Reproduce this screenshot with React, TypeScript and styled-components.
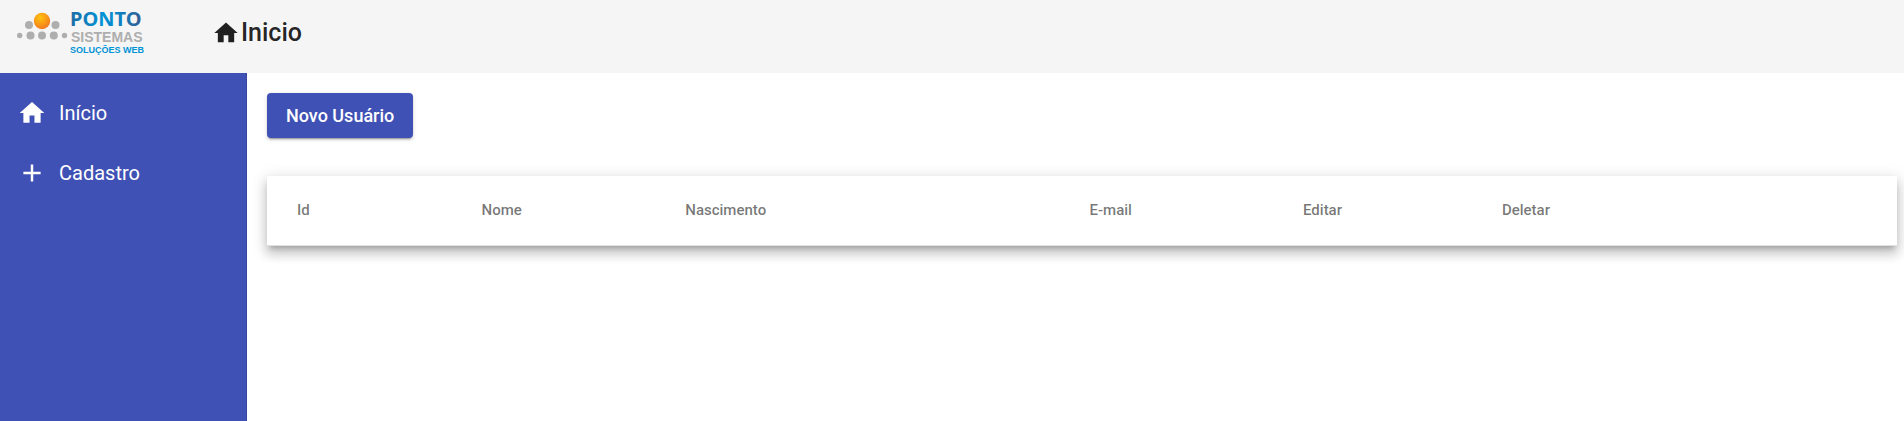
import React from "react";
import styled, { createGlobalStyle } from "styled-components";

const GlobalStyle = createGlobalStyle`
  *, *::before, *::after { box-sizing: border-box; }
  html, body, #root { height: 100%; }
  body { margin: 0; background: #fff; font-family: Roboto, "Liberation Sans", sans-serif; }
`;

const Page = styled.div`
  display: flex;
  flex-direction: column;
  min-height: 100%;
`;

const Header = styled.header`
  display: flex;
  align-items: flex-start;
  height: 73px;
  padding: 0 16px;
  background: #f5f5f5;
  color: rgba(0, 0, 0, 0.87);
`;

const LogoLink = styled.a`
  display: block;
  width: 196px;
`;

const Title = styled.h1`
  display: flex;
  align-items: center;
  gap: 1px;
  margin: 0;
  padding-top: 17px;
  font-size: 25px;
  font-weight: 500;
  line-height: 32px;
`;

const Body = styled.div`
  display: flex;
  flex: 1;
`;

const Sidebar = styled.nav`
  flex: 0 0 247px;
  padding-top: 8px;
  background: #3f51b5;
  border-right: 1px solid #37479f;
`;

const MenuItem = styled.a`
  display: flex;
  align-items: center;
  gap: 11px;
  height: 60px;
  padding: 4px 16px 0;
  color: #fff;
  font-size: 20px;
  line-height: 24px;
  text-decoration: none;
`;

const Icon = styled.svg<{ $size: number }>`
  flex: none;
  width: ${(p) => p.$size}px;
  height: ${(p) => p.$size}px;
  fill: currentColor;
`;

const Content = styled.main`
  flex: 1;
  min-width: 0;
  padding: 20px 7px 20px 20px;
`;

const PrimaryButton = styled.button`
  display: block;
  height: 45px;
  padding: 0 19px;
  border: 0;
  border-radius: 4px;
  background: #3f51b5;
  color: #fff;
  font-family: inherit;
  font-size: 18px;
  font-weight: 500;
  cursor: pointer;
  box-shadow: 0 3px 1px -2px rgba(0, 0, 0, 0.2), 0 2px 2px 0 rgba(0, 0, 0, 0.14),
    0 1px 5px 0 rgba(0, 0, 0, 0.12);
`;

const Table = styled.table`
  width: 100%;
  margin-top: 38px;
  border-collapse: separate;
  border-spacing: 0;
  table-layout: fixed;
  background: #fff;
  box-shadow: 0 5px 5px -3px rgba(0, 0, 0, 0.2), 0 8px 10px 1px rgba(0, 0, 0, 0.14),
    0 3px 14px 2px rgba(0, 0, 0, 0.12);
`;

const HeadCell = styled.th<{ $width?: string }>`
  width: ${(p) => p.$width ?? "auto"};
  height: 70px;
  padding: 0 0 2px 1px;
  border-bottom: 1px solid rgba(0, 0, 0, 0.12);
  color: rgba(0, 0, 0, 0.54);
  font-size: 15px;
  font-weight: 500;
  line-height: 20px;
  text-align: left;

  &:first-child {
    padding-left: 30px;
  }
`;

const columns = [
  { label: "Id", width: "13.1%" },
  { label: "Nome", width: "12.5%" },
  { label: "Nascimento", width: "24.8%" },
  { label: "E-mail", width: "13.1%" },
  { label: "Editar", width: "12.2%" },
  { label: "Deletar" },
];

const HOME = "M10 20v-6h4v6h5v-8h3L12 3 2 12h3v8z";
const ADD = "M19 13h-6v6h-2v-6H5v-2h6V5h2v6h6v2z";

function Logo() {
  return (
    <svg width="136" height="60" viewBox="16 0 136 60" role="img" aria-label="Ponto Sistemas Soluções Web">
      <defs>
        <radialGradient id="sun" cx="0.4" cy="0.3" r="0.7">
          <stop offset="0" stopColor="#ffc20e" />
          <stop offset="1" stopColor="#f47b20" />
        </radialGradient>
        <linearGradient id="brand" x1="0" x2="1">
          <stop offset="0" stopColor="#1e6ba3" />
          <stop offset="0.45" stopColor="#0093d6" />
          <stop offset="0.65" stopColor="#0a86c8" />
          <stop offset="1" stopColor="#355d92" />
        </linearGradient>
      </defs>
      <g fill="#aeaeae">
        <circle cx="29" cy="25" r="4" />
        <circle cx="55.500" cy="25" r="4" />
        <circle cx="19.700" cy="35.500" r="2.700" />
        <circle cx="30.500" cy="35.500" r="4" />
        <circle cx="42" cy="35.500" r="4" />
        <circle cx="53.800" cy="35.500" r="4" />
        <circle cx="64.500" cy="35.500" r="2.700" />
      </g>
      <circle cx="42" cy="21" r="8.200" fill="url(#sun)" />
      <text x="70" y="26" fill="url(#brand)" fontFamily="'Noto Sans', sans-serif" fontWeight="700" fontSize="20">PONTO</text>
      <text x="71" y="42" fill="#aeaeae" fontFamily="'Liberation Sans', sans-serif" fontWeight="700" fontSize="14">SISTEMAS</text>
      <text x="70" y="53" fill="#0093d6" fontFamily="'Liberation Sans', sans-serif" fontWeight="700" fontSize="9">SOLUÇÕES WEB</text>
    </svg>
  );
}

export default function App() {
  return (
    <Page>
      <GlobalStyle />
      <Header>
        <LogoLink href="#"><Logo /></LogoLink>
        <Title>
          <Icon $size={28} viewBox="0 0 24 24" aria-hidden="true"><path d={HOME} /></Icon>
          Inicio
        </Title>
      </Header>
      <Body>
        <Sidebar>
          <MenuItem href="#inicio">
            <Icon $size={32} viewBox="-1 -1 26 26" aria-hidden="true"><path d={HOME} /></Icon>
            Início
          </MenuItem>
          <MenuItem href="#cadastro">
            <Icon $size={32} viewBox="-1 -1 26 26" aria-hidden="true"><path d={ADD} /></Icon>
            Cadastro
          </MenuItem>
        </Sidebar>
        <Content>
          <PrimaryButton type="button">Novo Usuário</PrimaryButton>
          <Table>
            <thead>
              <tr>
                {columns.map((c) => (
                  <HeadCell key={c.label} $width={c.width} scope="col">{c.label}</HeadCell>
                ))}
              </tr>
            </thead>
          </Table>
        </Content>
      </Body>
    </Page>
  );
}
